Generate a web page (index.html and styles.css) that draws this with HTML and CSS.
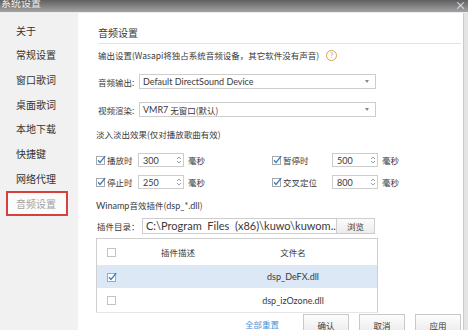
FILE: index.html
```html
<!DOCTYPE html>
<html>
<head>
<meta charset="utf-8">
<link rel="stylesheet" href="styles.css">
</head>
<body>
<div class="titlebar"><span class="title">系统设置</span><span class="close">×</span></div>
<div class="main">
  <nav class="sidebar">
    <div class="nav-item">关于</div>
    <div class="nav-item">常规设置</div>
    <div class="nav-item">窗口歌词</div>
    <div class="nav-item">桌面歌词</div>
    <div class="nav-item">本地下载</div>
    <div class="nav-item">快捷键</div>
    <div class="nav-item">网络代理</div>
    <div class="nav-item active">音频设置</div>
  </nav>
  <section class="panel">
    <div class="panel-title">音频设置</div>
    <div class="note">输出设置(Wasapi将独占系统音频设备，其它软件没有声音)<span class="help">?</span></div>
    <div class="field first"><span class="flabel">音频输出:</span><div class="select"><span class="latin">Default DirectSound Device</span><span class="arrow"></span></div></div>
    <div class="field"><span class="flabel">视频渲染:</span><div class="select"><span class="latin">VMR7</span>&nbsp;无窗口(默认)<span class="arrow"></span></div></div>
    <div class="fade-title">淡入淡出效果(仅对播放歌曲有效)</div>
    <div class="fade-row first">
      <div class="fade-item">
        <svg class="cb" viewBox="0 0 10 10"><rect x="0.5" y="1.5" width="8" height="8" fill="#fff" stroke="#a8a8a8"/><path d="M2 5.3 L4 7.5 L9.2 1.2" fill="none" stroke="#2f7fc4" stroke-width="1.3"/></svg>
        <span class="flbl">播放时</span>
        <div class="spin"><span class="latin">300</span><svg class="spin-arrows" viewBox="0 0 6 10"><path d="M1 4 L3 2 L5 4 M1 6 L3 8 L5 6" fill="none" stroke="#888" stroke-width="0.8"/></svg></div>
        <span class="unit">毫秒</span>
      </div>
      <div class="fade-item">
        <svg class="cb" viewBox="0 0 10 10"><rect x="0.5" y="1.5" width="8" height="8" fill="#fff" stroke="#a8a8a8"/><path d="M2 5.3 L4 7.5 L9.2 1.2" fill="none" stroke="#2f7fc4" stroke-width="1.3"/></svg>
        <span class="flbl wide">暂停时</span>
        <div class="spin"><span class="latin">500</span><svg class="spin-arrows" viewBox="0 0 6 10"><path d="M1 4 L3 2 L5 4 M1 6 L3 8 L5 6" fill="none" stroke="#888" stroke-width="0.8"/></svg></div>
        <span class="unit">毫秒</span>
      </div>
    </div>
    <div class="fade-row">
      <div class="fade-item">
        <svg class="cb" viewBox="0 0 10 10"><rect x="0.5" y="1.5" width="8" height="8" fill="#fff" stroke="#a8a8a8"/><path d="M2 5.3 L4 7.5 L9.2 1.2" fill="none" stroke="#2f7fc4" stroke-width="1.3"/></svg>
        <span class="flbl">停止时</span>
        <div class="spin"><span class="latin">250</span><svg class="spin-arrows" viewBox="0 0 6 10"><path d="M1 4 L3 2 L5 4 M1 6 L3 8 L5 6" fill="none" stroke="#888" stroke-width="0.8"/></svg></div>
        <span class="unit">毫秒</span>
      </div>
      <div class="fade-item">
        <svg class="cb" viewBox="0 0 10 10"><rect x="0.5" y="1.5" width="8" height="8" fill="#fff" stroke="#a8a8a8"/><path d="M2 5.3 L4 7.5 L9.2 1.2" fill="none" stroke="#2f7fc4" stroke-width="1.3"/></svg>
        <span class="flbl wide">交叉定位</span>
        <div class="spin"><span class="latin">800</span><svg class="spin-arrows" viewBox="0 0 6 10"><path d="M1 4 L3 2 L5 4 M1 6 L3 8 L5 6" fill="none" stroke="#888" stroke-width="0.8"/></svg></div>
        <span class="unit">毫秒</span>
      </div>
    </div>
    <div class="winamp"><span class="latin">Winamp</span>音效插件(<span class="latin">dsp_*.dll</span>)</div>
    <div class="path-row">
      <span class="plabel">插件目录：</span>
      <div class="path-input latin">C:\Program&nbsp; Files&nbsp; (x86)\kuwo\kuwom...</div>
      <div class="browse">浏览</div>
    </div>
    <div class="table">
      <div class="trow head">
        <span class="cell cbcell"><svg class="cb" viewBox="0 0 10 10"><rect x="0.5" y="1.5" width="8" height="8" fill="#fff" stroke="#c2c2c2"/></svg></span>
        <span class="cell">插件描述</span>
        <span class="cell">文件名</span>
        <span class="cell"></span>
      </div>
      <div class="trow sel">
        <span class="cell cbcell"><svg class="cb" viewBox="0 0 10 10"><rect x="0.5" y="1.5" width="8" height="8" fill="#fff" stroke="#a8a8a8"/><path d="M2 5.3 L4 7.5 L9.2 1.2" fill="none" stroke="#2f7fc4" stroke-width="1.3"/></svg></span>
        <span class="cell"></span>
        <span class="cell latin">dsp_DeFX.dll</span>
        <span class="cell"></span>
      </div>
      <div class="trow last">
        <span class="cell cbcell"><svg class="cb" viewBox="0 0 10 10"><rect x="0.5" y="1.5" width="8" height="8" fill="#fff" stroke="#c2c2c2"/></svg></span>
        <span class="cell"></span>
        <span class="cell latin">dsp_izOzone.dll</span>
        <span class="cell"></span>
      </div>
    </div>
    <div class="actions">
      <span class="reset">全部重置</span>
      <div class="btn">确认</div>
      <div class="btn">取消</div>
      <div class="btn">应用</div>
    </div>
  </section>
</div>
</body>
</html>
```
FILE: styles.css
```css
html, body {
  margin: 0;
  padding: 0;
}
body {
  width: 468px;
  height: 330px;
  overflow: hidden;
  background: #e4e4e4;
  font-family: "Noto Sans CJK SC", sans-serif;
  font-size: 8.5px;
  color: #3a3a3a;
}
.latin {
  font-family: "Lato", "Noto Sans CJK SC", sans-serif;
  font-size: 9px;
}
.titlebar {
  height: 12px;
  background: linear-gradient(#5f5f5f, #a3a3a3);
  border-bottom: 1px solid #ececec;
  display: flex;
  justify-content: space-between;
  overflow: hidden;
}
.title {
  color: #ececec;
  font-size: 10px;
  line-height: 10px;
  margin-top: -2px;
  padding-left: 1px;
}
.close {
  color: #eee;
  font-size: 11px;
  line-height: 10px;
  padding-right: 2px;
}
.main {
  display: flex;
  height: 317px;
}
.sidebar {
  width: 78px;
  flex: none;
  background: #f1f1f1;
  padding-top: 5.6px;
  box-sizing: border-box;
}
.nav-item {
  height: 24.7px;
  line-height: 24.7px;
  padding-left: 16px;
  font-size: 10px;
  color: #333;
}
.nav-item.active {
  margin-left: 6px;
  width: 62px;
  height: 25px;
  line-height: 21px;
  padding-left: 8px;
  box-sizing: border-box;
  border: 2px solid #d6403d;
  background: #fbfbfb;
  color: #a3a3a3;
}
.panel {
  width: 386px;
  flex: none;
  background: #fff;
  border-right: 1px solid #cacaca;
  padding: 13px 2px 0 18px;
  box-sizing: border-box;
}
.panel-title {
  margin-left: 2px;
  line-height: 14px;
  font-size: 10px;
  padding-bottom: 3px;
  border-bottom: 1px solid #e2e2e2;
}
.note {
  margin-top: 4px;
  margin-left: 2px;
  line-height: 14px;
  display: flex;
  align-items: center;
}
.help {
  width: 9px;
  height: 9px;
  border: 1px solid #d6a24a;
  border-radius: 50%;
  color: #c8923a;
  font-size: 7px;
  line-height: 9px;
  text-align: center;
  margin-left: 7px;
}
.field {
  display: flex;
  align-items: center;
  height: 15px;
  margin-top: 13px;
  margin-left: 2px;
}
.field.first {
  margin-top: 12px;
}
.flabel {
  width: 41px;
  white-space: nowrap;
}
.select {
  width: 237px;
  height: 15px;
  box-sizing: border-box;
  border: 1px solid #cdcdcd;
  padding-left: 3px;
  display: flex;
  align-items: center;
  position: relative;
}
.arrow {
  position: absolute;
  right: 6px;
  top: 5px;
  border-left: 2px solid transparent;
  border-right: 2px solid transparent;
  border-top: 3px solid #888;
}
.fade-title {
  margin-top: 10px;
  line-height: 14px;
}
.fade-row {
  display: grid;
  grid-template-columns: 176px 176px;
  height: 14px;
  margin-top: 8px;
}
.fade-row.first {
  margin-top: 12px;
}
.fade-item {
  display: flex;
  align-items: center;
}
.cb {
  width: 10px;
  height: 10px;
  flex: none;
}
.flbl {
  width: 31px;
  padding-left: 1px;
  white-space: nowrap;
}
.flbl.wide {
  width: 49px;
}
.spin {
  width: 46px;
  height: 14px;
  box-sizing: border-box;
  border: 1px solid #cdcdcd;
  display: flex;
  align-items: center;
  justify-content: space-between;
  padding-left: 4px;
  padding-right: 1px;
}
.spin-arrows {
  width: 6px;
  height: 10px;
}
.unit {
  margin-left: 4px;
}
.winamp {
  margin-top: 9px;
  line-height: 14px;
}
.path-row {
  display: flex;
  align-items: center;
  height: 16px;
  margin-top: 5px;
}
.plabel {
  width: 46px;
  padding-left: 1px;
  box-sizing: border-box;
  white-space: nowrap;
}
.path-input {
  width: 195px;
  height: 16px;
  box-sizing: border-box;
  border: 1px solid #cdcdcd;
  font-size: 11px;
  line-height: 14px;
  padding-left: 3px;
  white-space: nowrap;
  overflow: hidden;
}
.browse {
  width: 38px;
  height: 16px;
  box-sizing: border-box;
  border: 1px solid #cdcdcd;
  border-left: none;
  background: linear-gradient(#fbfbfb, #ececec);
  text-align: center;
  line-height: 14px;
}
.table {
  width: 280px;
  margin-top: 4px;
  border: 1px solid #cfcfcf;
  border-bottom-color: #e6e6e6;
}
.trow {
  display: grid;
  grid-template-columns: 29px 104px 126px 1fr;
  height: 23px;
  align-items: center;
}
.trow.head {
  height: 26px;
}
.trow.last {
  height: 24px;
}
.trow.sel {
  background: #dce8f6;
}
.cell {
  text-align: center;
}
.cbcell {
  display: flex;
  justify-content: center;
}
.actions {
  display: flex;
  justify-content: flex-end;
  align-items: flex-start;
  margin-top: 1px;
}
.reset {
  color: #4a97d8;
  margin-top: 4px;
  margin-right: 14px;
}
.btn {
  width: 46px;
  height: 22px;
  box-sizing: border-box;
  border: 1px solid #c9c9c9;
  background: linear-gradient(#fdfdfd, #e9e9e9);
  text-align: center;
  line-height: 20px;
  margin-left: 10px;
}
```
